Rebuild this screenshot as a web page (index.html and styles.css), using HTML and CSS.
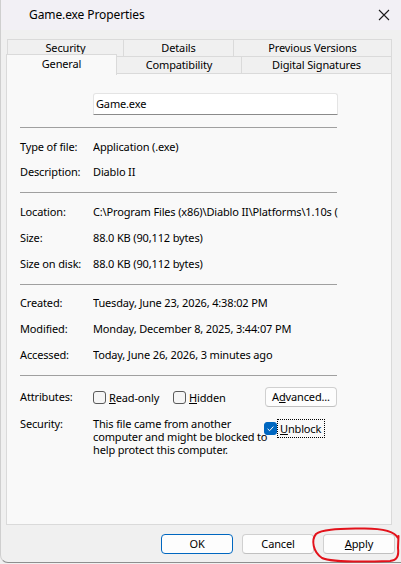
FILE: index.html
```html
<!DOCTYPE html>
<html>
<head>
<meta charset="utf-8">
<link rel="stylesheet" href="styles.css">
</head>
<body>
<div class="window">
  <div class="titlebar">
    <span class="title">Game.exe Properties</span>
    <svg class="close" width="12" height="12" viewBox="0 0 12 12"><path d="M1 1 L11 11 M11 1 L1 11" stroke="#1a1a1a" stroke-width="1.1" fill="none"/></svg>
  </div>
  <div class="tabs">
    <div class="tabrow back">
      <div class="tab t-sec">Security</div>
      <div class="tab t-det">Details</div>
      <div class="tab t-prev">Previous Versions</div>
    </div>
    <div class="tabrow front">
      <div class="tab active t-gen">General</div>
      <div class="tab t-comp">Compatibility</div>
      <div class="tab t-dig">Digital Signatures</div>
    </div>
  </div>
  <div class="panel">
    <div class="namebox">Game.exe</div>
    <div class="sep s1"></div>
    <div class="rows r1">
      <div class="row h25"><span class="lbl">Type of file:</span><span class="val">Application (.exe)</span></div>
      <div class="row h25"><span class="lbl">Description:</span><span class="val">Diablo II</span></div>
    </div>
    <div class="sep s2"></div>
    <div class="rows r2">
      <div class="row"><span class="lbl">Location:</span><span class="val clip">C:\Program Files (x86)\Diablo II\Platforms\1.10s (Beta)</span></div>
      <div class="row"><span class="lbl">Size:</span><span class="val">88.0 KB (90,112 bytes)</span></div>
      <div class="row"><span class="lbl">Size on disk:</span><span class="val">88.0 KB (90,112 bytes)</span></div>
    </div>
    <div class="sep s3"></div>
    <div class="rows r3">
      <div class="row"><span class="lbl">Created:</span><span class="val">Tuesday, June 23, 2026, 4:38:02 PM</span></div>
      <div class="row"><span class="lbl">Modified:</span><span class="val">Monday, December 8, 2025, 3:44:07 PM</span></div>
      <div class="row"><span class="lbl">Accessed:</span><span class="val">Today, June 26, 2026, 3 minutes ago</span></div>
    </div>
    <div class="sep s4"></div>
    <div class="attr">
      <span class="lbl">Attributes:</span>
      <div class="checks">
        <label class="chk c-ro"><span class="box"></span><span><u>R</u>ead-only</span></label>
        <label class="chk c-hid"><span class="box"></span><span><u>H</u>idden</span></label>
      </div>
      <div class="btn adv">A<u>d</u>vanced...</div>
    </div>
    <div class="secrow">
      <span class="lbl">Security:</span>
      <div class="sectext">This file came from another<br>computer and might be blocked to<br>help protect this computer.</div>
      <label class="chk unblock"><span class="box on"><svg width="13" height="13" viewBox="0 0 13 13"><path d="M3.6 6.8 L5.6 8.7 L9.4 4.6" stroke="#fff" stroke-width="1" fill="none"/></svg></span><span class="focus"><u>U</u>nblock</span></label>
    </div>
  </div>
  <div class="footer">
    <div class="btn default">OK</div>
    <div class="btn">Cancel</div>
    <div class="btn"><u>A</u>pply</div>
  </div>
  <svg class="scribble" width="401" height="564" viewBox="0 0 401 564">
    <path d="M398 538 C 394 530, 380 528, 360 528.5 C 340 529, 322 529, 316 534 C 311 540, 313 552, 322 558 C 330 562, 360 562, 390 561 C 397 560.5, 399 556, 398 548 L 398.5 536" stroke="#e3121b" stroke-width="2" fill="none" stroke-linecap="round"/>
  </svg>
</div>
</body>
</html>
```
FILE: styles.css
```css
* { box-sizing: border-box; }
html, body { margin: 0; padding: 0; }
body {
  width: 401px;
  height: 564px;
  overflow: hidden;
  background: #f0f0f0;
  font-family: "Noto Sans", "Liberation Sans", sans-serif;
  font-size: 11px;
  letter-spacing: -0.15px;
  color: #000;
}
.window {
  position: relative;
  width: 401px;
  height: 563px;
  background: #f0f0f0;
  border-left: 1px solid #cfcfcf;
  border-bottom: 1px solid #8e8e8e;
  border-bottom-left-radius: 8px;
  display: flex;
  flex-direction: column;
}
.titlebar {
  height: 30px;
  background: #f2f0f5;
  display: flex;
  align-items: center;
  justify-content: space-between;
  padding: 0 11px 2px 28px;
}
.title { font-size: 12px; letter-spacing: -0.1px; }
.close { margin-top: 2px; }
.tabs {
  display: flex;
  flex-direction: column;
  margin-top: 9px;
}
.tabrow { display: flex; }
.tab {
  text-align: center;
  background: #f0f0f0;
  border: 1px solid #dadada;
  border-bottom: none;
  line-height: 15px;
}
.back { margin-left: 6px; height: 17px; }
.back .tab { height: 17px; border-right: none; }
.back .t-prev { border-right: 1px solid #dadada; }
.t-sec { width: 116px; }
.t-det { width: 110px; }
.t-prev { width: 159px; }
.front { margin-left: 5px; height: 19px; margin-top: -2px; position: relative; z-index: 2; }
.front .tab { height: 17px; margin-top: 2px; border-left: none; }
.front .t-gen {
  width: 111px;
  height: 21px;
  margin-top: 0;
  background: #f9f9f9;
  border-left: 1px solid #dadada;
  line-height: 17px;
}
.t-comp { width: 125px; }
.t-dig { width: 150px; border-right: 1px solid #dadada; }
.panel {
  margin-left: 5px;
  width: 386px;
  height: 452px;
  background: #f9f9f9;
  border: 1px solid #dadada;
  padding: 0 0 0 13px;
  display: flex;
  flex-direction: column;
}
.namebox {
  margin-top: 19px;
  margin-left: 73px;
  width: 245px;
  height: 22px;
  background: #fff;
  border: 1px solid #e4e4e4;
  border-bottom: 1px solid #8a8a8a;
  border-radius: 3px 3px 0 0;
  padding-left: 2px;
  line-height: 20px;
}
.sep {
  width: 317px;
  height: 1px;
  background: #a0a0a0;
}
.s1 { margin-top: 12px; }
.s2 { margin-top: 8px; }
.s3 { margin-top: 7px; }
.s4 { margin-top: 7px; }
.r1 { margin-top: 6px; }
.r2 { margin-top: 6px; }
.r3 { margin-top: 5px; }
.row {
  display: grid;
  grid-template-columns: 73px 245px;
  height: 26px;
  line-height: 26px;
}
.row.h25 { height: 25px; line-height: 25px; }
.val { white-space: nowrap; overflow: hidden; }
.attr {
  margin-top: 11px;
  height: 20px;
  display: grid;
  grid-template-columns: 73px 172px 72px;
  align-items: center;
}
.attr .lbl { margin-top: -2px; }
.checks { display: flex; gap: 0; }
.chk { display: flex; align-items: center; gap: 3px; white-space: nowrap; }
.c-ro { width: 80px; }
.box {
  width: 13px;
  height: 13px;
  border: 1px solid #5a5a5a;
  border-radius: 3px;
  background: #f5f5f5;
  display: inline-block;
  flex: none;
}
.box.on {
  background: #0067c0;
  border-color: #0067c0;
  position: relative;
}
.box.on svg { position: absolute; left: -1px; top: -1px; }
.btn {
  width: 72px;
  height: 20px;
  background: #fdfdfd;
  border: 1px solid #d0d0d0;
  border-bottom-color: #c0c0c0;
  border-radius: 4px;
  text-align: center;
  line-height: 18px;
}
.btn.default { border: 1px solid #0067c0; }
.secrow {
  margin-top: 10px;
  display: grid;
  grid-template-columns: 73px 171px auto;
  line-height: 13px;
}
.sectext { white-space: nowrap; }
.unblock { align-self: start; margin-top: 5px; height: 13px; }
.focus {
  outline: 1px dotted #000;
  outline-offset: 2px;
  line-height: 13px;
  padding-right: 1px;
}
.footer {
  display: flex;
  justify-content: flex-end;
  gap: 9px;
  padding-right: 6px;
  margin-top: 9px;
}
.scribble {
  position: absolute;
  left: -1px;
  top: 0;
  pointer-events: none;
}
```
